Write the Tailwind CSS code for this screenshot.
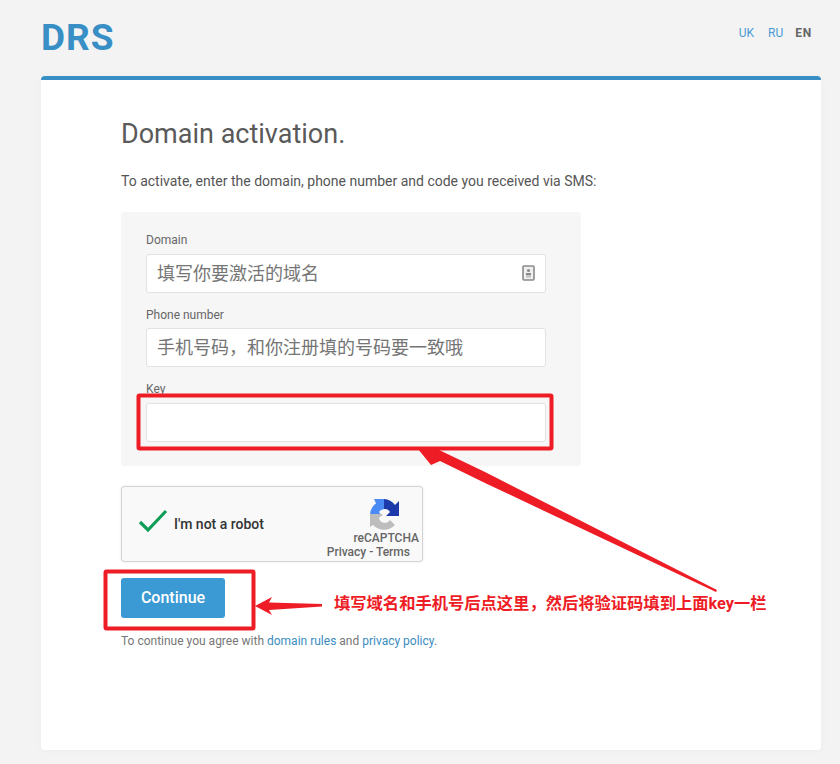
<!DOCTYPE html>
<html>
<head>
<meta charset="utf-8">
<script src="https://cdn.jsdelivr.net/npm/@tailwindcss/browser@4"></script>
</head>
<body class="bg-[#f3f3f3] font-['Roboto','Noto_Sans_CJK_SC',sans-serif] text-[#555]">
<div class="relative h-[764px] w-[840px] overflow-hidden pr-[19px] pl-[41px]">
  <header class="flex h-[76px] items-start justify-between">
    <div class="mt-[16px] text-[37px] leading-[44px] font-bold tracking-[1px] text-[#388fc6]">DRS</div>
    <nav class="mt-[25px] mr-[9px] flex gap-[14px] text-xs leading-[16px]">
      <a class="text-[#4a9bd4]">UK</a>
      <a class="text-[#4a9bd4]">RU</a>
      <span class="-ml-[2px] font-bold tracking-[0.8px] text-[#666]">EN</span>
    </nav>
  </header>

  <main class="h-[674px] rounded-[4px] border-t-4 border-[#388fc6] bg-white pt-[38px] pl-20 shadow-[0_0_8px_rgba(0,0,0,0.03)]">
    <h1 class="text-[27px] leading-[32px] font-normal text-[#5a5a5a]">Domain activation.</h1>
    <p class="mt-[21px] text-sm leading-[20px] text-[#555]">To activate, enter the domain, phone number and code you received via SMS:</p>

    <form class="mt-[21px] h-[254px] w-[460px] rounded-[4px] bg-[#f6f6f6] px-[25px] pt-[20px]">
      <label class="block text-xs leading-[16px] text-[#666]">Domain</label>
      <div class="relative mt-[6px] w-[400px]">
        <input class="block h-[39px] w-[400px] rounded-[3px] border border-[#e2e2e2] bg-white px-[10px] text-[18px] placeholder:text-[#757575]" placeholder="填写你要激活的域名">
        <svg class="absolute top-[11px] right-[10px]" width="14" height="16" viewBox="0 0 14 16" fill="none">
          <rect x="1" y="1" width="11" height="14" rx="1" stroke="#8a8a8a" stroke-width="1.6" fill="#efefef"/>
          <circle cx="6.5" cy="5.5" r="1.6" fill="#8a8a8a"/>
          <rect x="4" y="8" width="5" height="2.4" fill="#8a8a8a"/>
          <rect x="4" y="11.2" width="5" height="1.3" fill="#bbb"/>
        </svg>
      </div>
      <label class="mt-[14px] block text-xs leading-[16px] text-[#666]">Phone number</label>
      <input class="mt-[5px] block h-[39px] w-[400px] rounded-[3px] border border-[#e2e2e2] bg-white px-[10px] text-[18px] placeholder:text-[#757575]" placeholder="手机号码，和你注册填的号码要一致哦">
      <label class="mt-[14px] block text-xs leading-[16px] text-[#666]">Key</label>
      <input class="mt-[6px] block h-[39px] w-[400px] rounded-[3px] border border-[#e2e2e2] bg-white px-[10px] text-[18px]">
    </form>

    <div class="relative mt-[20px] h-[76px] w-[302px] rounded-[3px] border border-[#d3d3d3] bg-[#f9f9f9] shadow-[0_0_3px_rgba(0,0,0,0.08)]">
      <svg class="absolute top-[22px] left-[16px]" width="30" height="24" viewBox="0 0 30 24" fill="none">
        <path d="M2 13 L10 21 L28 2" stroke="#0f9d58" stroke-width="3.2"/>
      </svg>
      <span class="absolute top-[27px] left-[52px] text-sm leading-[20px] font-medium text-[#333]">I'm not a robot</span>
      <svg class="absolute top-[11px] left-[248px]" width="30" height="35" viewBox="0 0 30 35" fill="none">
        <path d="M0 17 A14 14 0 0 1 14 3 L14 11 A6 6 0 0 0 9 14 L12 18 L0 18 Z" fill="#4a8af4"/>
        <path d="M4 1 L14 1 L14 11 L9 12 Z" fill="#4a8af4"/>
        <path d="M14 1 A16 16 0 0 1 25 7 L29 3 L29 18 L16 18 L20 14 A6 6 0 0 0 14 11 Z" fill="#1c3aa9"/>
        <path d="M0 16 L13 16 L9 20 A6 6 0 0 0 20 22 L25 27 A15 15 0 0 1 3 27 L0 29 Z" fill="#bdbdbd"/>
      </svg>
      <div class="absolute top-[44px] right-[3px] text-right text-xs leading-[14px] font-medium text-[#666]">
        <div>reCAPTCHA</div>
        <div class="pr-[9px]">Privacy - Terms</div>
      </div>
    </div>

    <button class="mt-[16px] block h-[40px] w-[104px] rounded-[3px] bg-[#3b99d4] text-base font-medium text-white">Continue</button>
    <p class="mt-[15px] text-xs leading-[16px] text-[#777]">To continue you agree with <a class="text-[#3a8cc0]">domain rules</a> and <a class="text-[#3a8cc0]">privacy policy</a>.</p>
  </main>

  <svg class="absolute top-0 left-0" width="840" height="764" viewBox="0 0 840 764" fill="none">
    <rect x="138.5" y="395.5" width="413" height="53" rx="1" stroke="#ee1c25" stroke-width="4"/>
    <rect x="105.5" y="571.5" width="148" height="57" rx="1" stroke="#ee1c25" stroke-width="4"/>
    <path d="M418 449 L437 449 L485 472 L717 590 L716 592 L485 483 L440 461 L431 465 Z" fill="#ee1c25"/>
    <path d="M255 606 L272 597 L269 602.5 L322 604 L322 606.5 L269 610 L272 615 Z" fill="#ee1c25"/>
  </svg>
  <div class="absolute top-[592px] left-[334px] text-[16.3px] leading-[24px] font-bold whitespace-nowrap text-[#ee1c25]">填写域名和手机号后点这里，然后将验证码填到上面key一栏</div>
</div>
</body>
</html>
